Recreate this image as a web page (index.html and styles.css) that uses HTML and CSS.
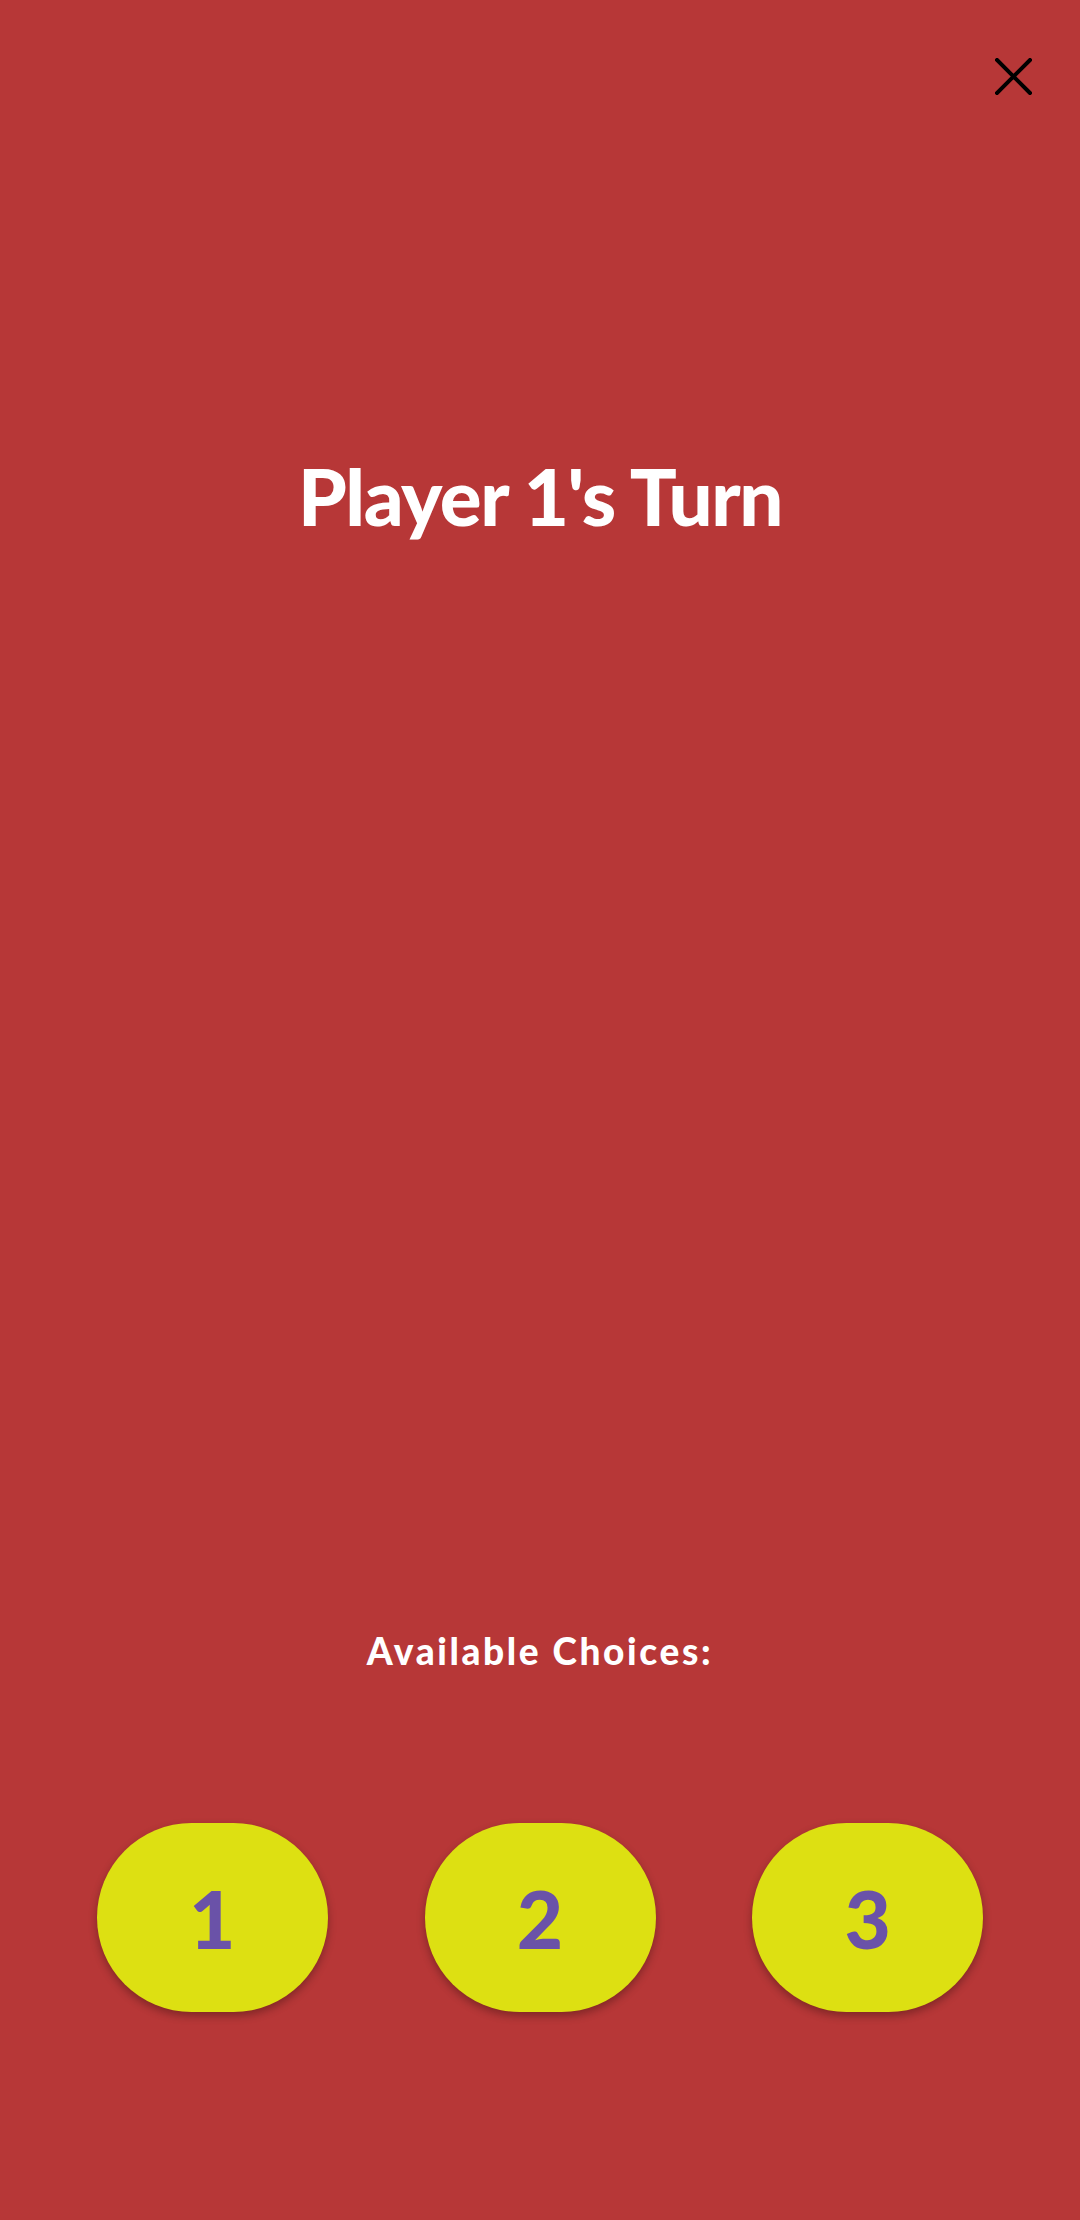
FILE: index.html
```html
<!DOCTYPE html>
<html lang="en">
<head>
<meta charset="utf-8">
<title>Player 1's Turn</title>
<link rel="stylesheet" href="styles.css">
</head>
<body>
<div class="screen">
  <div class="topbar">
    <button class="close" aria-label="Close">
      <svg width="37" height="37" viewBox="0 0 37 37"><path d="M2 2 L35 35 M35 2 L2 35" stroke="#000" stroke-width="4" stroke-linecap="square" fill="none"/></svg>
    </button>
  </div>
  <h1 class="title">Player 1's Turn</h1>
  <h2 class="subtitle">Available Choices:</h2>
  <div class="choices">
    <button class="choice">1</button>
    <button class="choice">2</button>
    <button class="choice">3</button>
  </div>
</div>
</body>
</html>
```
FILE: styles.css
```css
html, body {
  margin: 0;
  padding: 0;
}
body {
  background: #b73737;
  font-family: "Lato", "Open Sans", sans-serif;
  color: #fff;
}
.screen {
  width: 1080px;
  height: 2220px;
  display: flex;
  flex-direction: column;
}
.topbar {
  display: flex;
  justify-content: flex-end;
  padding: 58px 48px 0 0;
}
.close {
  background: none;
  border: 0;
  padding: 0;
  width: 37px;
  height: 37px;
  display: block;
}
.close svg { display: block; }
.title {
  margin: 362px 0 0;
  font-size: 78px;
  line-height: 1;
  font-weight: 900;
  letter-spacing: -1.4px;
  text-align: center;
}
.subtitle {
  margin: 1097px 0 0;
  font-size: 37px;
  line-height: 1;
  font-weight: 900;
  letter-spacing: 2.6px;
  text-align: center;
}
.choices {
  margin-top: 154px;
  display: flex;
  justify-content: space-evenly;
}
.choice {
  width: 231px;
  height: 189px;
  border: 0;
  border-radius: 94.5px;
  background: #dde012;
  color: #6a52a8;
  font-family: "Lato", "Open Sans", sans-serif;
  font-weight: 900;
  font-size: 80px;
  line-height: 1;
  box-shadow: 0 4px 8px rgba(0, 0, 0, 0.3);
  padding: 0;
}
```
